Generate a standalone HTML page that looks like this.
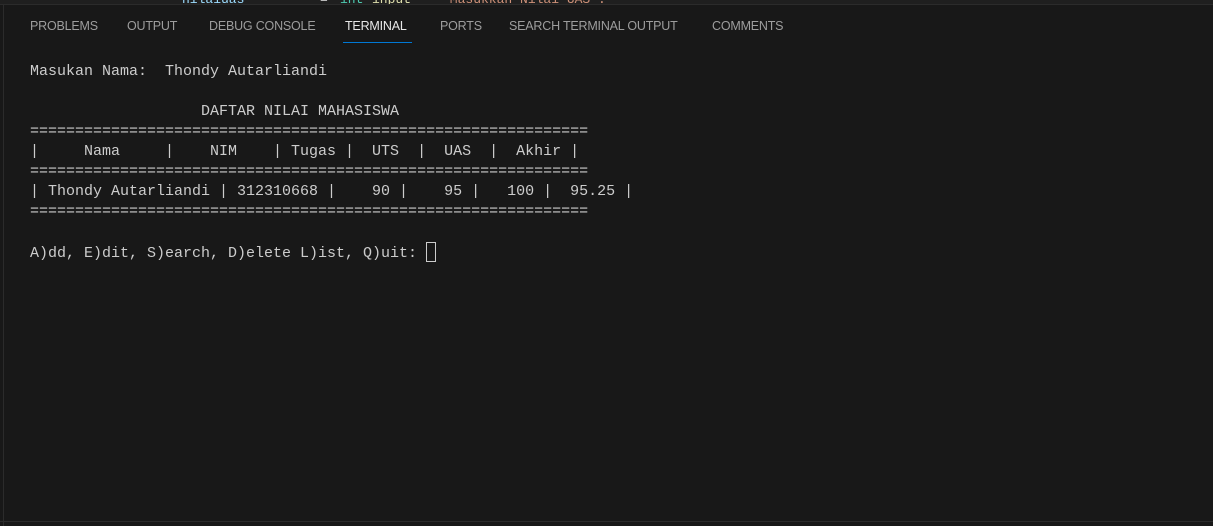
<!DOCTYPE html>
<html><head><meta charset="utf-8"><style>
html,body{margin:0;padding:0;width:1213px;height:526px;overflow:hidden;background:#181818;}
.top{position:absolute;left:0;top:0;width:1213px;height:4px;background:#1f1f1f;border-bottom:1px solid #2b2b2b;overflow:hidden}
.lb{position:absolute;left:3px;top:5px;width:1px;height:521px;background:#2b2b2b}
.bb{position:absolute;left:0;top:521px;width:1213px;height:1px;background:#2b2b2b}
.tab{position:absolute;top:19px;font:12.5px "Liberation Sans",sans-serif;color:#9d9d9d;white-space:nowrap;letter-spacing:-0.2px}
.act{color:#e7e7e7}
.ul{position:absolute;left:343px;top:42px;width:69px;height:1px;background:#0078d4}
pre{position:absolute;left:30px;top:62px;margin:0;font:15px/20px "Liberation Mono",monospace;color:#cccccc}
.cur{display:inline-block;width:8px;height:18px;border:1px solid #cccccc;vertical-align:-5px}
</style></head><body>
<div class="top">
<div style="position:absolute;left:182px;top:-8px;font:13px 'Liberation Mono',monospace;color:#9cdcfe">nilaiuas</div>
<div style="position:absolute;left:320px;top:-8px;font:13px 'Liberation Mono',monospace;color:#ccc">=</div>
<div style="position:absolute;left:340px;top:-8px;font:13px 'Liberation Mono',monospace;color:#4ec9b0">int</div>
<div style="position:absolute;left:372px;top:-8px;font:13px 'Liberation Mono',monospace;color:#dcdcaa">input</div>
<div style="position:absolute;left:442px;top:-8px;font:13px 'Liberation Mono',monospace;color:#ce9178">"Masukkan Nilai UAS : "</div>
</div>
<div class="lb"></div><div class="bb"></div>
<div class="tab" style="left:30px">PROBLEMS</div>
<div class="tab" style="left:127px">OUTPUT</div>
<div class="tab" style="left:209px">DEBUG CONSOLE</div>
<div class="tab act" style="left:345px">TERMINAL</div>
<div class="tab" style="left:440px">PORTS</div>
<div class="tab" style="left:509px">SEARCH TERMINAL OUTPUT</div>
<div class="tab" style="left:712px">COMMENTS</div>
<div class="ul"></div>
<pre>Masukan Nama:  Thondy Autarliandi

                   DAFTAR NILAI MAHASISWA
==============================================================
|     Nama     |    NIM    | Tugas |  UTS  |  UAS  |  Akhir |
==============================================================
| Thondy Autarliandi | 312310668 |    90 |    95 |   100 |  95.25 |
==============================================================

A)dd, E)dit, S)earch, D)elete L)ist, Q)uit: <span class="cur"></span></pre>
</body></html>
